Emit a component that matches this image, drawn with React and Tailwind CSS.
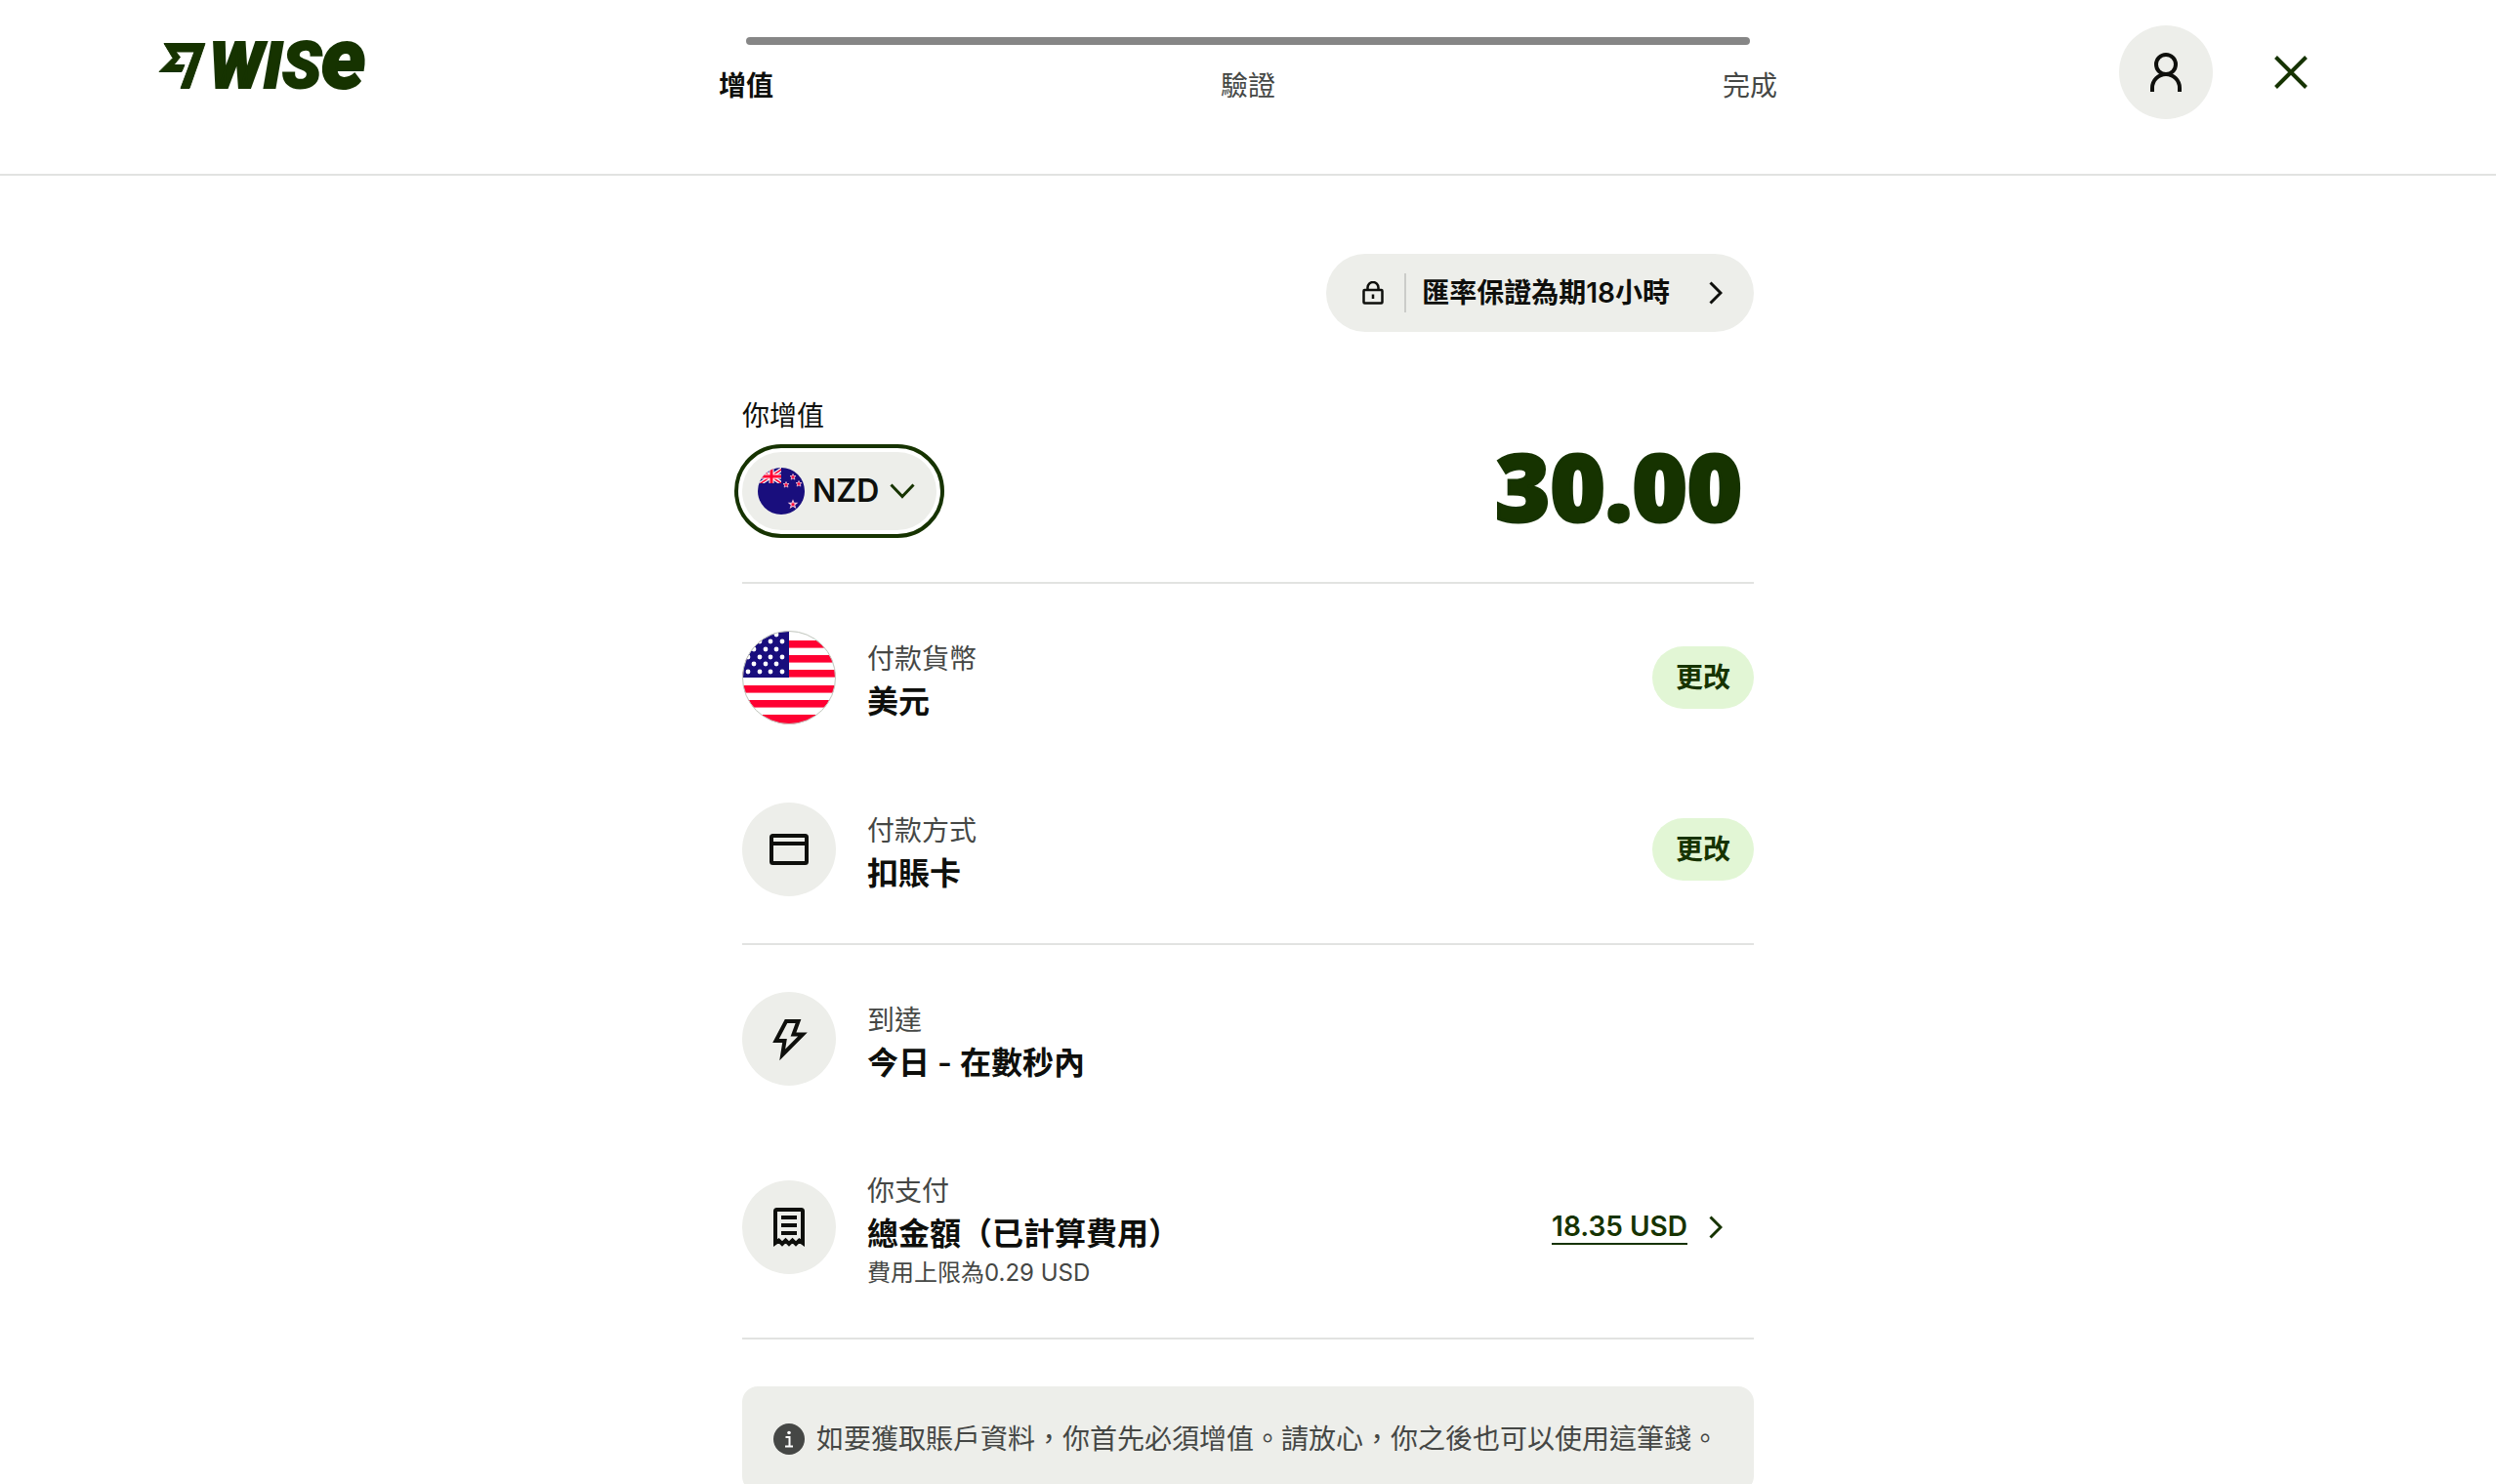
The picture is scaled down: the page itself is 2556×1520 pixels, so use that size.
import { useState } from 'react'
import clsx from 'clsx'

const STEPS = ['增值', '驗證', '完成']

const STRIPES = [10, 25, 40, 56, 71, 86]
const STAR_ROWS = [
  { y: 4, xs: [35, 24, 12] },
  { y: 11, xs: [41, 29, 18, 6] },
  { y: 19, xs: [35, 24, 12] },
  { y: 27, xs: [41, 29, 18, 6] },
  { y: 34, xs: [35, 24, 12] },
  { y: 42, xs: [41, 29, 18, 6] },
]

/* ---------- Icons ---------- */

function Icon({ children, className = 'size-12' }) {
  return (
    <svg viewBox="0 0 48 48" fill="none" stroke="currentColor" strokeWidth="4" className={className} aria-hidden="true">
      {children}
    </svg>
  )
}

const PersonIcon = () => (
  <Icon>
    <circle cx="24" cy="16" r="10" />
    <path d="M10 44v-4a14 14 0 0 1 28 0v4" />
  </Icon>
)

const CloseIcon = () => (
  <Icon>
    <path d="M8.500 8.500l31 31M39.500 8.500l-31 31" />
  </Icon>
)

const CardIcon = () => (
  <Icon>
    <rect x="6" y="10" width="36" height="28" rx="1.500" />
    <path d="M6 18h36" />
  </Icon>
)

const BoltIcon = () => (
  <Icon>
    <path d="M21 6h12.500l-5 13.500H38L17.200 40.500 19.500 26H10.500z" />
  </Icon>
)

const ReceiptIcon = () => (
  <Icon>
    <path d="M10 40V7.500Q10 6 11.500 6h25Q38 6 38 7.500V40l-3.500-2.500L31 41l-3.500-3.500L24 41l-3.500-3.500L17 41l-3.500-3.500z" />
    <path d="M16 14h16M16 22h16M16 30h16" />
  </Icon>
)

const LockIcon = () => (
  <svg viewBox="0 0 24 24" fill="none" stroke="currentColor" strokeWidth="2.500" className="size-6" aria-hidden="true">
    <rect x="2.500" y="9" width="19" height="13.500" rx="1" />
    <path d="M6.500 9V6.500a5.500 5.500 0 0 1 11 0V9M12 13.500v4.500" />
  </svg>
)

const ChevronRight = () => (
  <svg viewBox="0 0 14 24" fill="none" stroke="currentColor" strokeWidth="3" className="h-6 w-3.5 shrink-0" aria-hidden="true">
    <path d="M1.500 1.500L12 12 1.500 22.500" />
  </svg>
)

const InfoIcon = () => (
  <svg viewBox="0 0 32 32" className="size-8 shrink-0" aria-hidden="true">
    <circle cx="16" cy="16" r="16" fill="#454745" />
    <circle cx="16" cy="9.500" r="1.800" fill="#fff" />
    <path d="M12.500 14h4v9.500M12 23.500h8" fill="none" stroke="#fff" strokeWidth="2" />
  </svg>
)

function FlagUS() {
  return (
    <svg viewBox="0 0 96 96" className="size-24" role="img" aria-label="USD">
      <clipPath id="us"><circle cx="48" cy="48" r="47.500" /></clipPath>
      <g clipPath="url(#us)">
        <rect width="96" height="96" fill="#fff" />
        {STRIPES.map(y => <rect key={y} y={y} width="96" height={y === 86 ? 10 : 7.6} fill="#ff0032" />)}
        <rect width="48" height="48" fill="#190e7d" />
        {STAR_ROWS.map(row => row.xs.map(x => (
          <circle key={`${x}-${row.y}`} cx={x} cy={row.y} r="2.400" fill="#fff" />
        )))}
      </g>
      <circle cx="48" cy="48" r="47.500" fill="none" stroke="#c3c8c0" />
    </svg>
  )
}

function FlagNZ() {
  return (
    <svg viewBox="0 0 48 48" className="pointer-events-none absolute left-4 size-12" aria-hidden="true">
      <clipPath id="nz"><circle cx="24" cy="24" r="24" /></clipPath>
      <clipPath id="jack"><rect width="24" height="16" /></clipPath>
      <g clipPath="url(#nz)">
        <rect width="48" height="48" fill="#190e7d" />
        <g clipPath="url(#jack)">
          <path d="M0 0L24 16M0 18L27 0" stroke="#fff" strokeWidth="4" />
          <path d="M0 0L24 16M0 18L27 0" stroke="#ff0032" strokeWidth="1.500" />
          <path d="M14 0v16M0 9h24" stroke="#fff" strokeWidth="5" />
          <path d="M14 0v16M0 9h24" stroke="#ff0032" strokeWidth="3" />
        </g>
        {[[36, 9.5], [29, 17.5], [42, 16.5], [36, 37.5]].map(([x, y], i) => (
          <path
            key={i}
            transform={`translate(${x} ${y}) scale(${i === 3 ? 1.3 : 1})`}
            d="M0-3l.8 2h2.200l-1.700 1.400.6 2.200L0 1.400l-1.900 1.200.6-2.200L-3-1h2.200z"
            fill="#ff0032"
            stroke="#f3c6dd"
            strokeWidth=".8"
          />
        ))}
      </g>
    </svg>
  )
}

function Logo() {
  return (
    <a href="#" aria-label="Wise" className="flex h-12 items-end text-[#163300]">
      <svg viewBox="0 0 48 48" className="size-12 shrink-0 overflow-visible" fill="currentColor" stroke="currentColor" aria-hidden="true">
        <path d="M6 .5H48L32 46.500H23L37 9H18L22.500 14.500 16 22.500H27L24 29.500H1L15 15.500z" />
      </svg>
      <span className="ml-1 flex items-baseline font-[Roboto] text-[66px] leading-[48px] font-black italic [-webkit-text-stroke:2px]">
        WIS<span className="text-[86px] leading-[48px]">e</span>
      </span>
    </a>
  )
}

/* ---------- Building blocks ---------- */

function Stepper({ current }) {
  return (
    <nav className="pt-[38px]">
      <div className="h-2 rounded-full bg-[#868686]" />
      <ol className="-mx-7 mt-[22px] flex justify-between text-[28px] leading-10">
        {STEPS.map((step, i) => (
          <li
            key={step}
            aria-current={i === current ? 'step' : undefined}
            className={clsx(i === current ? 'font-semibold text-[#0e0f0c]' : 'text-[#454745]')}
          >
            {step}
          </li>
        ))}
      </ol>
    </nav>
  )
}

function Row({ media, label, title, note, children }) {
  return (
    <div className="flex items-center">
      <div className="flex size-24 shrink-0 items-center justify-center rounded-full bg-[#edeeea]">{media}</div>
      <div className="ml-8 flex-1 pt-1.5">
        <p className="text-[28px] leading-11 text-[#454745]">{label}</p>
        <p className="text-[32px] leading-11 font-semibold">{title}</p>
        {note && <p className="text-2xl leading-9 text-[#454745]">{note}</p>}
      </div>
      {children}
    </div>
  )
}

function ChangeButton() {
  return (
    <button className="h-16 rounded-full bg-[#e2f6d5] px-6 text-[28px] leading-10 font-semibold text-[#163300]">
      更改
    </button>
  )
}

export default function App() {
  const [currency, setCurrency] = useState('NZD')
  const [amount, setAmount] = useState('30.00')

  return (
    <div lang="zh-Hant" className="bg-white font-[Inter,'Noto_Sans_CJK_TC',sans-serif] text-[#0e0f0c]">
      <header className="grid grid-cols-[1fr_minmax(0,1028px)_1fr] items-start border-b-2 border-[#e2e3e1] px-[162px] pb-14">
        <div className="pt-11">
          <Logo />
        </div>
        <Stepper current={0} />
        <div className="flex justify-end gap-8 pt-[26px]">
          <button aria-label="帳戶" className="flex size-24 items-center justify-center rounded-full bg-[#edeeea]">
            <PersonIcon />
          </button>
          <button aria-label="關閉" className="flex size-24 items-center justify-center text-[#163300]">
            <CloseIcon />
          </button>
        </div>
      </header>

      <main className="mx-auto max-w-[1036px] pt-20">
        <div className="flex justify-end">
          <button className="flex h-20 items-center rounded-full bg-[#edeeea] pr-8 pl-9 text-[28px] leading-10 font-semibold">
            <LockIcon />
            <span className="mr-4 ml-5 h-10 w-0.5 bg-[#cbccc9]" />
            匯率保證為期18小時
            <span className="ml-10"><ChevronRight /></span>
          </button>
        </div>

        {/* Amount */}
        <section className="border-b-2 border-[#e2e3e1] pt-[66px] pb-[53px]">
          <label htmlFor="amount" className="block text-[28px] leading-10">你增值</label>
          <div className="mt-[17px] flex h-20 items-center justify-between">
            <div className="relative flex items-center">
              <select
                aria-label="貨幣"
                value={currency}
                onChange={e => setCurrency(e.target.value)}
                className="h-20 w-[199px] appearance-none rounded-full bg-[#edeeea] pl-[72px] text-[32px] font-semibold outline-4 outline-offset-4 outline-[#163300]"
              >
                <option>NZD</option>
                <option>USD</option>
              </select>
              <FlagNZ />
              <svg viewBox="0 0 26 16" fill="none" stroke="#163300" strokeWidth="3" className="pointer-events-none absolute right-[22px] h-4 w-[26px]" aria-hidden="true">
                <path d="M1.500 1.500L13 13.500 24.500 1.500" />
              </svg>
            </div>
            <input
              id="amount"
              inputMode="decimal"
              value={amount}
              onChange={e => setAmount(e.target.value)}
              className="h-32 w-[520px] pr-3 pb-3 text-right font-['Open_Sans'] text-[96px] font-extrabold text-[#163300] [-webkit-text-stroke:3px]"
            />
          </div>
        </section>

        {/* Payment */}
        <section className="flex flex-col gap-20 border-b-2 border-[#e2e3e1] py-12">
          <Row media={<FlagUS />} label="付款貨幣" title="美元">
            <ChangeButton />
          </Row>
          <Row media={<CardIcon />} label="付款方式" title="扣賬卡">
            <ChangeButton />
          </Row>
        </section>

        {/* Summary */}
        <section className="flex flex-col gap-20 border-b-2 border-[#e2e3e1] py-12">
          <Row media={<BoltIcon />} label="到達" title="今日 - 在數秒內" />
          <Row media={<ReceiptIcon />} label="你支付" title="總金額（已計算費用）" note="費用上限為0.29 USD">
            <a href="#" className="mr-8 flex items-center gap-[22px] text-[28px] leading-[34px] font-semibold text-[#163300]">
              <span className="border-b-2 border-[#163300]">18.35 USD</span>
              <ChevronRight />
            </a>
          </Row>
        </section>

        <div className="mt-12 flex items-center gap-3 rounded-2xl bg-[#edeeea] px-8 py-8 text-[28px] leading-11 text-[#454745]">
          <InfoIcon />
          <p>如要獲取賬戶資料，你首先必須增值。請放心，你之後也可以使用這筆錢。</p>
        </div>
      </main>
    </div>
  )
}
